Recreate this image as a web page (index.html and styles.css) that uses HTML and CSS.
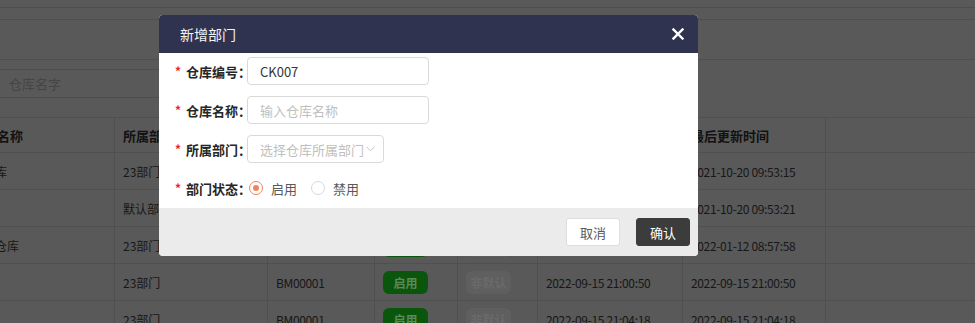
FILE: index.html
```html
<!DOCTYPE html>
<html lang="zh-CN">
<head>
<meta charset="utf-8">
<title>新增部门</title>
<link rel="stylesheet" href="styles.css">
</head>
<body>
<div class="page">
  <div class="band band-a"></div>
  <div class="band band-b"></div>
  <div class="toolbar"></div>
  <div class="search-row"><div class="search-input">仓库名字</div></div>
  <div class="table-wrap">
    <table class="grid">
      <colgroup>
        <col class="c1"><col class="c2"><col class="c3"><col class="c4"><col class="c5"><col class="c6"><col class="c7"><col class="c8">
      </colgroup>
      <thead>
        <tr><th class="first">仓库名称</th><th>所属部门</th><th>部门编号</th><th>状态</th><th>是否默认</th><th>创建时间</th><th>最后更新时间</th><th></th></tr>
      </thead>
      <tbody>
        <tr><td class="first">二号库</td><td>23部门</td><td class="num">BM00001</td><td><span class="tag tag-on">启用</span></td><td><span class="tag tag-off">非默认</span></td><td class="num">2021-10-20 09:53:15</td><td class="num">2021-10-20 09:53:15</td><td></td></tr>
        <tr><td class="first">默认</td><td>默认部门</td><td class="num">BM00000</td><td><span class="tag tag-on">启用</span></td><td><span class="tag tag-off">默认</span></td><td class="num">2021-10-20 09:53:21</td><td class="num">2021-10-20 09:53:21</td><td></td></tr>
        <tr><td class="first">新增仓库</td><td>23部门</td><td class="num">BM00001</td><td><span class="tag tag-on">启用</span></td><td><span class="tag tag-off">非默认</span></td><td class="num">2022-01-12 08:57:58</td><td class="num">2022-01-12 08:57:58</td><td></td></tr>
        <tr><td class="first">测试</td><td>23部门</td><td class="num">BM00001</td><td><span class="tag tag-on">启用</span></td><td><span class="tag tag-off">非默认</span></td><td class="num">2022-09-15 21:00:50</td><td class="num">2022-09-15 21:00:50</td><td></td></tr>
        <tr><td class="first">测试</td><td>23部门</td><td class="num">BM00001</td><td><span class="tag tag-on">启用</span></td><td><span class="tag tag-off">非默认</span></td><td class="num">2022-09-15 21:04:18</td><td class="num">2022-09-15 21:04:18</td><td></td></tr>
      </tbody>
    </table>
  </div>
</div>

<div class="modal">
  <div class="modal-header">
    <span class="modal-title">新增部门</span>
    <span class="modal-close" aria-label="关闭">
      <svg width="12" height="12" viewBox="0 0 12 12"><path d="M1.5 1.5 L10.5 10.5 M10.5 1.5 L1.5 10.5" stroke="#ffffff" stroke-width="2.4" stroke-linecap="square" fill="none"/></svg>
    </span>
  </div>
  <div class="modal-body">
    <div class="form-row">
      <span class="req">*</span><span class="label">仓库编号：</span>
      <input class="field" type="text" value="CK007">
    </div>
    <div class="form-row">
      <span class="req">*</span><span class="label">仓库名称：</span>
      <input class="field" type="text" placeholder="输入仓库名称">
    </div>
    <div class="form-row">
      <span class="req">*</span><span class="label">所属部门：</span>
      <div class="select"><span class="select-ph">选择仓库所属部门</span>
        <svg class="select-arrow" width="9" height="6" viewBox="0 0 9 6"><path d="M0.5 0.8 L4.5 4.8 L8.5 0.8" stroke="#c4c4c4" stroke-width="1" fill="none"/></svg>
      </div>
    </div>
    <div class="form-row">
      <span class="req">*</span><span class="label">部门状态：</span>
      <div class="radios">
        <span class="radio"><span class="radio-dot checked"></span><span class="radio-text">启用</span></span>
        <span class="radio"><span class="radio-dot"></span><span class="radio-text">禁用</span></span>
      </div>
    </div>
  </div>
  <div class="modal-footer">
    <button class="btn btn-cancel">取消</button>
    <button class="btn btn-ok">确认</button>
  </div>
</div>
</body>
</html>
```

FILE: styles.css
```css
* { box-sizing: border-box; }
html, body { margin: 0; padding: 0; }
body {
  width: 975px;
  height: 323px;
  overflow: hidden;
  position: relative;
  background: #595959;
  font-family: "Noto Sans CJK SC", "Noto Sans", sans-serif;
}
.page { height: 323px; overflow: hidden; }
.band-a { height: 8px; border-bottom: 1px solid #4e4e4e; }
.band-b { height: 12px; border-bottom: 1px solid #4e4e4e; }
.toolbar { height: 40px; border-bottom: 1px solid #4e4e4e; }
.search-row { padding-top: 9px; }
.search-input {
  margin-left: -1px;
  width: 240px;
  height: 29px;
  border: 1px solid #4e4e4e;
  padding-left: 9px;
  line-height: 27px;
  font-size: 13px;
  color: #454545;
}
.table-wrap { margin-top: 19px; margin-left: -60px; }
.grid {
  border-collapse: collapse;
  table-layout: fixed;
  width: 1045px;
  font-size: 12px;
  color: #171717;
}
.c1 { width: 174px; }
.c2 { width: 153px; }
.c3 { width: 107px; }
.c4 { width: 83px; }
.c5 { width: 80px; }
.c6 { width: 145px; }
.c7 { width: 143px; }
.c8 { width: 160px; }
.grid th, .grid td {
  border: 1px solid #505050;
  padding: 0 8px;
  text-align: left;
  white-space: nowrap;
  overflow: hidden;
}
.grid th {
  height: 35px;
  font-size: 13px;
  font-weight: 700;
  color: #121212;
}
.grid td { height: 37px; }
.grid .first { padding-left: 30px; }
.grid .num { letter-spacing: -0.35px; }
.tag {
  display: inline-block;
  width: 45px;
  height: 23px;
  line-height: 23px;
  border-radius: 6px;
  text-align: center;
  font-size: 12px;
  font-weight: 700;
}
.tag-on { background: #0a560c; color: #5b8a5b; }
.tag-off { background: #5f5f5f; color: #6a6a6a; }

.modal {
  position: absolute;
  left: 159px;
  top: 15px;
  width: 539px;
  background: #ffffff;
  border-radius: 4px;
  overflow: hidden;
}
.modal-header {
  height: 38px;
  background: #2f3350;
  display: flex;
  align-items: center;
  justify-content: space-between;
  padding: 0 14px 0 21px;
}
.modal-title { color: #f4f4f6; font-size: 14px; }
.modal-close { display: flex; width: 12px; height: 12px; }
.modal-body {
  padding: 4px 0 6px 16px;
  display: flex;
  flex-direction: column;
  gap: 11px;
}
.form-row {
  display: flex;
  align-items: center;
  height: 28px;
}
.req {
  flex: 0 0 11px;
  color: #f5222d;
  font-size: 12px;
  font-weight: 700;
  line-height: 12px;
}
.label {
  flex: 0 0 61px;
  min-width: 0;
  width: 61px;
  white-space: nowrap;
  font-size: 13px;
  font-weight: 700;
  color: #262626;
}
.field {
  flex: none;
  width: 182px;
  height: 28px;
  border: 1px solid #d9d9d9;
  border-radius: 4px;
  padding: 0 12px;
  font-family: inherit;
  font-size: 13px;
  color: #333333;
  outline: none;
}
.field::placeholder { color: #bfbfbf; }
.select {
  flex: none;
  width: 137px;
  height: 28px;
  border: 1px solid #d9d9d9;
  border-radius: 4px;
  padding: 0 10px 0 12px;
  display: flex;
  align-items: center;
  justify-content: space-between;
}
.select-ph { font-size: 13px; color: #bfbfbf; white-space: nowrap; }
.select-arrow { flex: none; margin-left: 2px; }
.radios { display: flex; align-items: center; gap: 14px; padding-left: 2px; }
.radio { display: flex; align-items: center; gap: 8px; }
.radio-dot {
  width: 14px;
  height: 14px;
  border-radius: 50%;
  border: 1px solid #d9d9d9;
  display: flex;
  align-items: center;
  justify-content: center;
}
.radio-dot.checked { border-color: #f0845a; }
.radio-dot.checked::after {
  content: "";
  width: 6px;
  height: 6px;
  border-radius: 50%;
  background: #f0845a;
}
.radio-text { font-size: 13px; color: #595959; }
.modal-footer {
  height: 48px;
  background: #ebebeb;
  display: flex;
  align-items: center;
  justify-content: flex-end;
  gap: 16px;
  padding: 0 8px;
}
.btn {
  width: 54px;
  height: 28px;
  border-radius: 3px;
  font-family: inherit;
  font-size: 13px;
  cursor: pointer;
}
.btn-cancel { background: #ffffff; border: 1px solid #dedede; color: #595959; }
.btn-ok { background: #3c3c3c; border: 1px solid #3c3c3c; color: #ffffff; }
```
